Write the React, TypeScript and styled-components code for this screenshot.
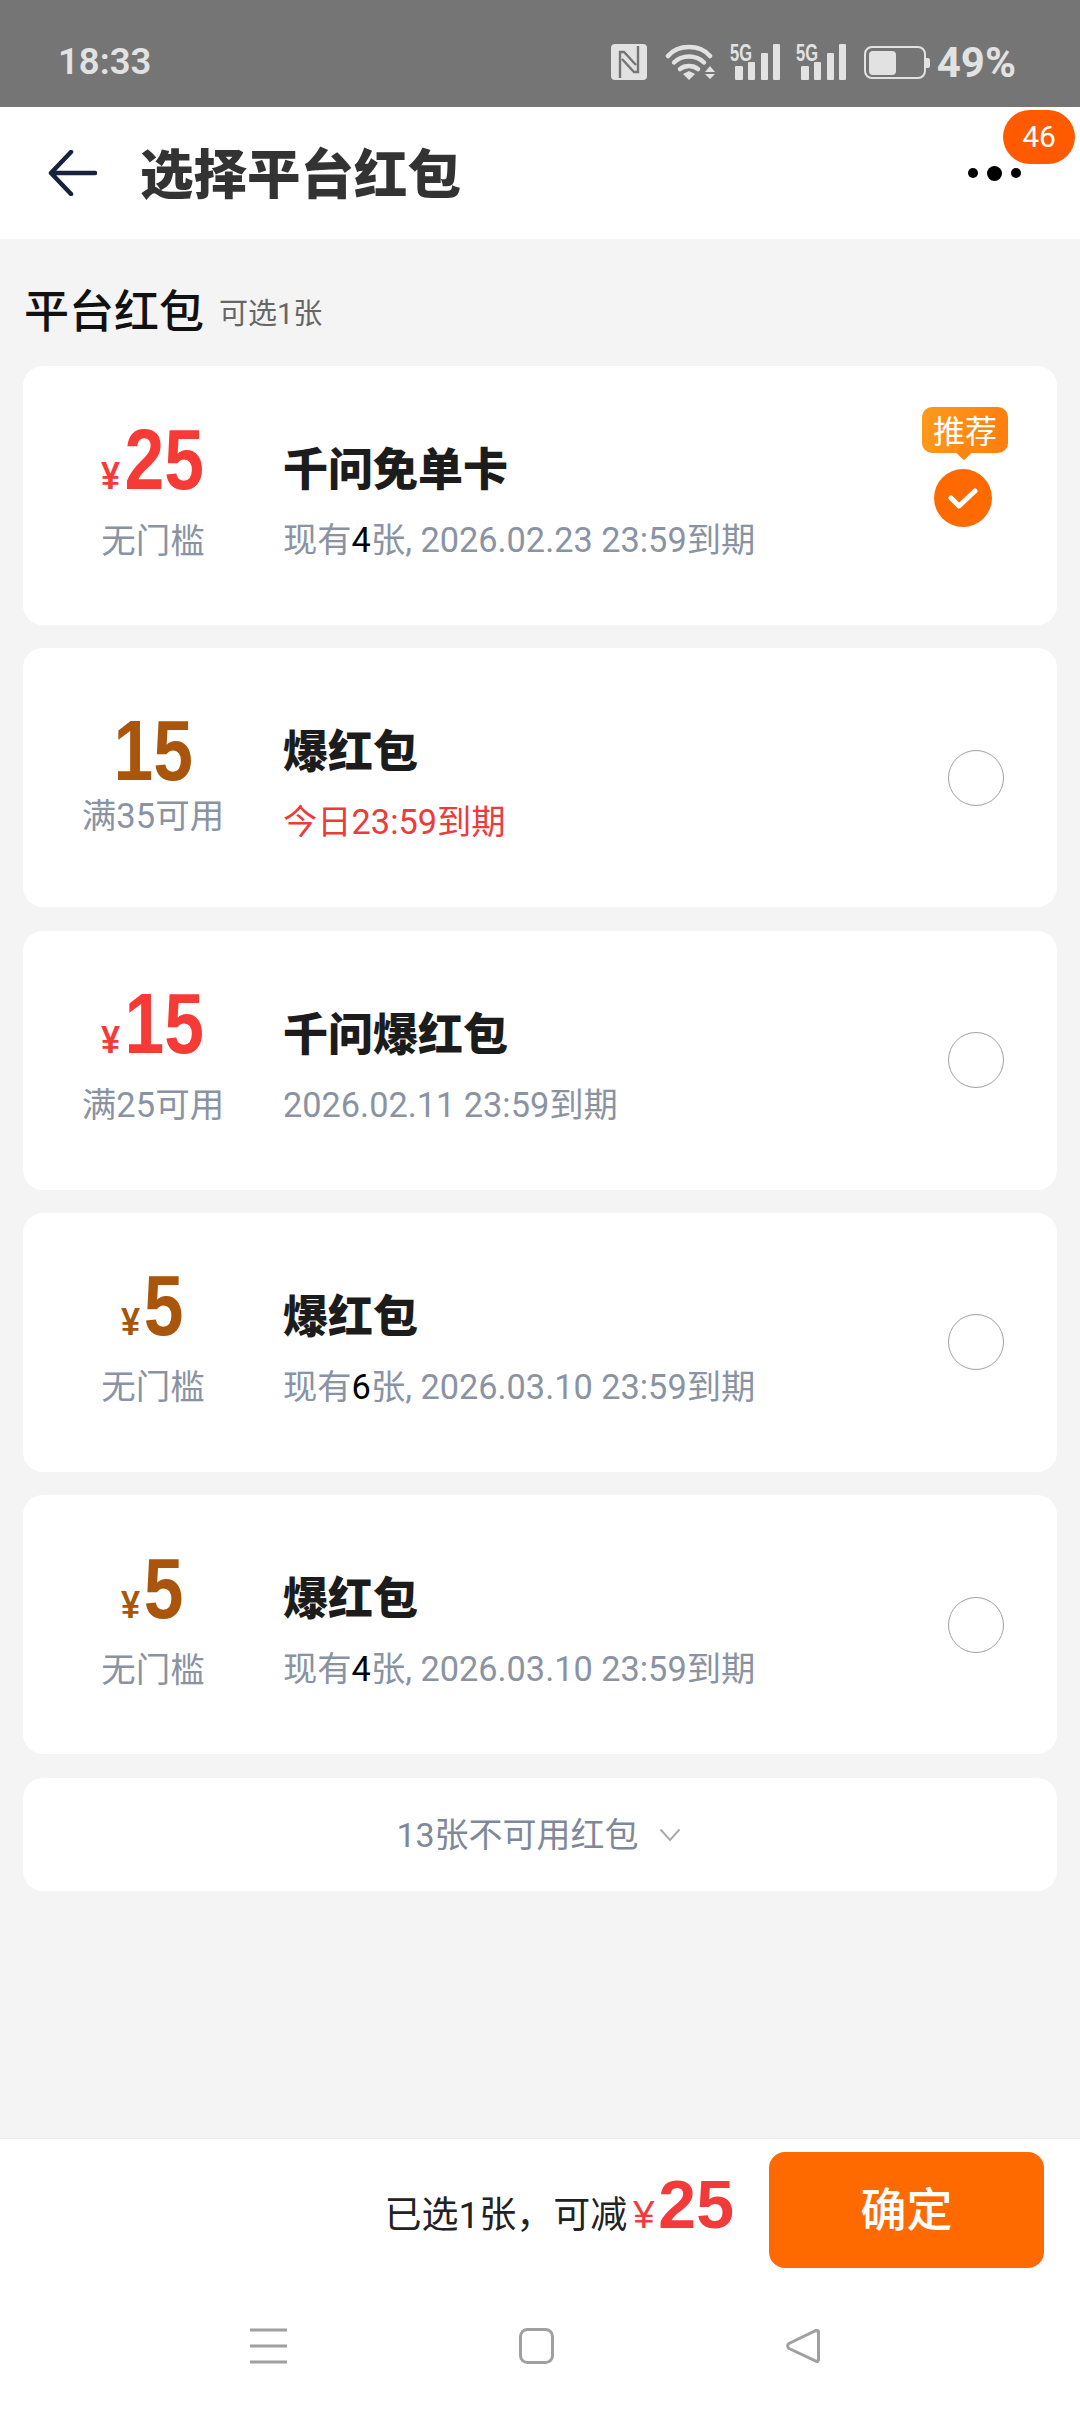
import React from "react";
import styled, { createGlobalStyle } from "styled-components";

const CJK = `Roboto, "Noto Sans CJK SC", sans-serif`;

const Global = createGlobalStyle`
  html, body { margin: 0; padding: 0; background: #f4f4f4; }
  * { box-sizing: border-box; }
  body { font-family: ${CJK}; }
`;

const Page = styled.div`
  width: 1080px;
  height: 2412px;
  display: flex;
  flex-direction: column;
  background: #f4f4f4;
  overflow: hidden;
`;

const StatusBar = styled.div`
  height: 107px;
  flex: none;
  background: #757575;
  color: #e2e2e2;
  display: flex;
  align-items: flex-start;
  justify-content: space-between;
  padding: 44px 64px 0 58px;
`;

const Clock = styled.span`
  font: 600 36.5px/36px Roboto, sans-serif;
`;

const StatusIcons = styled.div`
  display: flex;
  align-items: flex-start;
`;

const StatusGlyph = styled.svg<{ $gap: number; $lift?: number }>`
  display: block;
  flex: none;
  margin-right: ${(p) => p.$gap}px;
  margin-top: ${(p) => -(p.$lift ?? 0)}px;
`;

const Percent = styled.span`
  font: 700 42px/38px Roboto, sans-serif;
`;

const NavBar = styled.header`
  position: relative;
  height: 132px;
  flex: none;
  background: #fff;
  display: flex;
  align-items: center;
  padding: 0 59px 0 48px;
`;

const BackIcon = styled.svg`
  display: block;
  flex: none;
  margin: 0 43px 0 0;
`;

const PageTitle = styled.h1`
  flex: 1;
  margin: 0;
  padding-top: 6px;
  font: 900 53.5px/60px ${CJK};
  color: #333;
`;

const MoreDots = styled.div`
  display: flex;
  align-items: center;
  gap: 9px;
`;

const Dot = styled.i<{ $size: number }>`
  display: block;
  width: ${(p) => p.$size}px;
  height: ${(p) => p.$size}px;
  border-radius: 50%;
  background: #000;
`;

const Badge = styled.span`
  position: absolute;
  top: 3px;
  right: 5px;
  width: 72px;
  height: 54px;
  border-radius: 27px;
  background: #ff5a00;
  color: #fff;
  font: 400 30px/54px Roboto, sans-serif;
  text-align: center;
`;

const Main = styled.main`
  flex: 1;
  padding: 0 23px;
  display: flex;
  flex-direction: column;
`;

const SectionHeader = styled.div`
  height: 127px;
  flex: none;
  display: flex;
  align-items: center;
  gap: 15px;
  padding: 18px 0 0 1px;
`;

const SectionTitle = styled.h2`
  margin: 0;
  padding-top: 2px;
  font: 500 45px/56px ${CJK};
  color: #111;
`;

const SectionHint = styled.span`
  padding-top: 4px;
  font: 400 29px/40px ${CJK};
  color: #666;
`;

const CardList = styled.div`
  display: flex;
  flex-direction: column;
  gap: 23.25px;
`;

const Card = styled.section`
  position: relative;
  height: 259px;
  border-radius: 20px;
  background: #fff;
  display: flex;
  align-items: center;
`;

const AmountCol = styled.div<{ $plain: boolean }>`
  width: 260px;
  flex: none;
  display: flex;
  flex-direction: column;
  align-items: center;
  margin-bottom: ${(p) => (p.$plain ? -3 : 0)}px;
`;

const Amount = styled.div<{ $tone: string; $plain: boolean }>`
  display: flex;
  align-items: baseline;
  color: ${(p) => p.$tone};
  height: 84px;
  margin-bottom: ${(p) => (p.$plain ? -10 : 6)}px;
`;

const Yen = styled.span`
  display: inline-block;
  font: 700 38px/62px "Liberation Sans", sans-serif;
  transform: scaleX(0.9);
  margin: 0 3px 0 -2px;
`;

const Digits = styled.span<{ $count: number }>`
  display: inline-block;
  font: 700 85px/62px "Liberation Sans", sans-serif;
  transform: scaleX(0.84);
  margin: 0 ${(p) => -p.$count * 3.8}px;
`;

const Threshold = styled.span`
  font: 400 34.5px/44px ${CJK};
  color: #8a93a3;
`;

const InfoCol = styled.div`
  flex: 1;
  display: flex;
  flex-direction: column;
  gap: 21px;
  padding-top: 16px;
`;

const CardName = styled.h3`
  margin: 0;
  font: 900 45px/52px ${CJK};
  color: #1c1c1c;
`;

const Expiry = styled.p<{ $urgent: boolean }>`
  margin: 0;
  font: 400 34.3px/44px ${CJK};
  color: ${(p) => (p.$urgent ? "#ec3b3b" : "#8a93a3")};
`;

const Count = styled.b`
  font-weight: 400;
  color: #000;
`;

const Radio = styled.div`
  width: 56px;
  height: 56px;
  flex: none;
  margin-right: 53px;
  border: 1.2px solid #a0a0a0;
  border-radius: 50%;
`;

const Checked = styled.div`
  position: relative;
  width: 58px;
  height: 58px;
  flex: none;
  margin: 4px 65px 0 0;
  border-radius: 50%;
  background: #ff6a00;
  display: flex;
  align-items: center;
  justify-content: center;
`;

const Tip = styled.span`
  position: absolute;
  left: -12px;
  top: -62px;
  width: 86px;
  height: 46px;
  border-radius: 10px;
  background: linear-gradient(100deg, #fb9a1c, #ff7d0d);
  color: #fff;
  font: 400 32px/45px "Noto Sans CJK SC", sans-serif;
  text-align: center;
  &::after {
    content: "";
    position: absolute;
    left: 36px;
    bottom: -5px;
    width: 12px;
    height: 12px;
    background: #fc8512;
    transform: rotate(45deg);
    border-radius: 2px;
  }
`;

const MoreRow = styled.div`
  height: 113px;
  margin-top: 24px;
  flex: none;
  border-radius: 20px;
  background: #fff;
  display: flex;
  align-items: center;
  justify-content: center;
  gap: 20px;
  padding-right: 3px;
  font: 400 34px/44px ${CJK};
  color: #7f8899;
`;

const Footer = styled.footer`
  height: 274px;
  flex: none;
  background: #fff;
  border-top: 1px solid #ececec;
  display: flex;
  flex-direction: column;
`;

const SummaryRow = styled.div`
  display: flex;
  justify-content: flex-end;
  align-items: center;
  padding: 13px 36px 0 0;
`;

const Summary = styled.div`
  display: flex;
  align-items: baseline;
  margin-right: 35px;
  color: #222;
  font: 400 37px/60px ${CJK};
`;

const SummaryYen = styled.span`
  font: 400 38px/60px "Liberation Sans", sans-serif;
  color: #f23a3a;
  margin: 0 4px 0 6px;
`;

const SummaryValue = styled.span`
  font: 700 68px/60px "Liberation Sans", sans-serif;
  color: #f23a3a;
`;

const ConfirmButton = styled.button`
  width: 275px;
  height: 116px;
  border: 0;
  border-radius: 16px;
  background: #ff6a00;
  color: #fff;
  font: 500 46px/60px ${CJK};
  padding: 0;
`;

const SystemNav = styled.nav`
  flex: 1;
  display: flex;
  justify-content: center;
  align-items: flex-start;
  gap: 232px;
  padding: 60px 10px 0 0;
`;

const Signal = ({ gap }: { gap: number }) => (
  <StatusGlyph $gap={gap} $lift={5} width="51" height="41" viewBox="0 -5 51 41">
    <text x="0" y="17" textLength="22" lengthAdjust="spacingAndGlyphs" fontFamily="'Liberation Sans',sans-serif" fontWeight="700" fontSize="23" fill="#e2e2e2">5G</text>
    <g fill="#e2e2e2">
      <rect x="5" y="22" width="8" height="14" rx="1" />
      <rect x="18" y="18" width="7" height="18" rx="1" />
      <rect x="31" y="9" width="7" height="27" rx="1" />
      <rect x="43" y="0" width="7" height="36" rx="1" />
    </g>
  </StatusGlyph>
);

type Coupon = {
  value: string;
  yen: boolean;
  tone: string;
  threshold: string;
  name: string;
  count?: string;
  date: string;
  urgent?: boolean;
  selected?: boolean;
};

const RED = "#f63a36";
const BROWN = "#a9550b";

const coupons: Coupon[] = [
  { value: "25", yen: true, tone: RED, threshold: "无门槛", name: "千问免单卡", count: "4", date: "2026.02.23 23:59到期", selected: true },
  { value: "15", yen: false, tone: BROWN, threshold: "满35可用", name: "爆红包", date: "今日23:59到期", urgent: true },
  { value: "15", yen: true, tone: RED, threshold: "满25可用", name: "千问爆红包", date: "2026.02.11 23:59到期" },
  { value: "5", yen: true, tone: BROWN, threshold: "无门槛", name: "爆红包", count: "6", date: "2026.03.10 23:59到期" },
  { value: "5", yen: true, tone: BROWN, threshold: "无门槛", name: "爆红包", count: "4", date: "2026.03.10 23:59到期" },
];

export default function App() {
  return (
    <Page>
      <Global />
      <StatusBar>
        <Clock>18:33</Clock>
        <StatusIcons>
          <StatusGlyph $gap={18} width="36" height="36" viewBox="0 0 36 36">
            <rect width="36" height="36" rx="4" fill="#e2e2e2" />
            <path d="M9 34V8h4l12 13M27 2v26h-4L11 15" fill="none" stroke="#757575" strokeWidth="2.4" />
          </StatusGlyph>
          <StatusGlyph $gap={14} width="51" height="36" viewBox="0 0 51 36">
            <g fill="none" stroke="#e2e2e2" strokeWidth="4.5" strokeLinecap="round">
              <path d="M3 12C13 0 35 0 45 12" />
              <path d="M9 18.5c8-8 22-8 30 0" />
              <path d="M15 25c5-4 13-4 18 0" />
            </g>
            <path d="M18 30l6-3 6 3-6 6z" fill="#e2e2e2" />
            <path d="M40 28l5-6 5 6zM40 30l5 5 5-5z" fill="#e2e2e2" />
          </StatusGlyph>
          <Signal gap={15} />
          <Signal gap={17} />
          <StatusGlyph $gap={7} width="66" height="36" viewBox="0 0 66 36">
            <rect x="1" y="3" width="60" height="31" rx="7" fill="none" stroke="#e2e2e2" strokeWidth="2" />
            <rect x="5" y="7" width="27" height="24" rx="4" fill="#e2e2e2" />
            <path d="M62 14h2a2 2 0 0 1 2 2v6a2 2 0 0 1-2 2h-2z" fill="#e2e2e2" />
          </StatusGlyph>
          <Percent>49%</Percent>
        </StatusIcons>
      </StatusBar>

      <NavBar>
        <BackIcon width="49" height="46" viewBox="0 0 49 46">
          <path d="M47 23H3M23 2L3 23l20 21" fill="none" stroke="#17233b" strokeWidth="4.5" strokeLinecap="round" strokeLinejoin="round" />
        </BackIcon>
        <PageTitle>选择平台红包</PageTitle>
        <MoreDots>
          <Dot $size={10} />
          <Dot $size={15} />
          <Dot $size={10} />
        </MoreDots>
        <Badge>46</Badge>
      </NavBar>

      <Main>
        <SectionHeader>
          <SectionTitle>平台红包</SectionTitle>
          <SectionHint>可选1张</SectionHint>
        </SectionHeader>
        <CardList>
          {coupons.map((c, i) => (
            <Card key={i}>
              <AmountCol $plain={!c.yen}>
                <Amount $tone={c.tone} $plain={!c.yen}>
                  {c.yen && <Yen>¥</Yen>}
                  <Digits $count={c.value.length}>{c.value}</Digits>
                </Amount>
                <Threshold>{c.threshold}</Threshold>
              </AmountCol>
              <InfoCol>
                <CardName>{c.name}</CardName>
                <Expiry $urgent={!!c.urgent}>
                  {c.count && (
                    <>
                      现有<Count>{c.count}</Count>张,{" "}
                    </>
                  )}
                  {c.date}
                </Expiry>
              </InfoCol>
              {c.selected ? (
                <Checked>
                  <Tip>推荐</Tip>
                  <svg width="30" height="24" viewBox="0 0 30 24">
                    <path d="M3 12l8 8L27 5" fill="none" stroke="#fff" strokeWidth="5" strokeLinecap="round" strokeLinejoin="round" />
                  </svg>
                </Checked>
              ) : (
                <Radio />
              )}
            </Card>
          ))}
        </CardList>
        <MoreRow>
          13张不可用红包
          <svg width="22" height="14" viewBox="0 0 22 14">
            <path d="M1.5 1.5L11 12l9.5-10.5" fill="none" stroke="#a5abb6" strokeWidth="2" />
          </svg>
        </MoreRow>
      </Main>

      <Footer>
        <SummaryRow>
          <Summary>
            已选1张，可减
            <SummaryYen>¥</SummaryYen>
            <SummaryValue>25</SummaryValue>
          </Summary>
          <ConfirmButton>确定</ConfirmButton>
        </SummaryRow>
        <SystemNav>
          <svg width="37" height="36" viewBox="0 0 37 36">
            <path d="M0 2h37M0 18h37M0 34h37" stroke="#a0a0a0" strokeWidth="3" />
          </svg>
          <svg width="35" height="36" viewBox="0 0 35 36">
            <rect x="1.5" y="1.5" width="32" height="33" rx="7" fill="none" stroke="#a0a0a0" strokeWidth="3" />
          </svg>
          <svg width="34" height="36" viewBox="0 0 34 36">
            <path d="M31 2.5a1.5 1.5 0 0 1 1.5 1.5v28a1.5 1.5 0 0 1-2 1.3L3 20.5a3 3 0 0 1 0-5L29 2.8z" fill="none" stroke="#a0a0a0" strokeWidth="3" strokeLinejoin="round" />
          </svg>
        </SystemNav>
      </Footer>
    </Page>
  );
}
